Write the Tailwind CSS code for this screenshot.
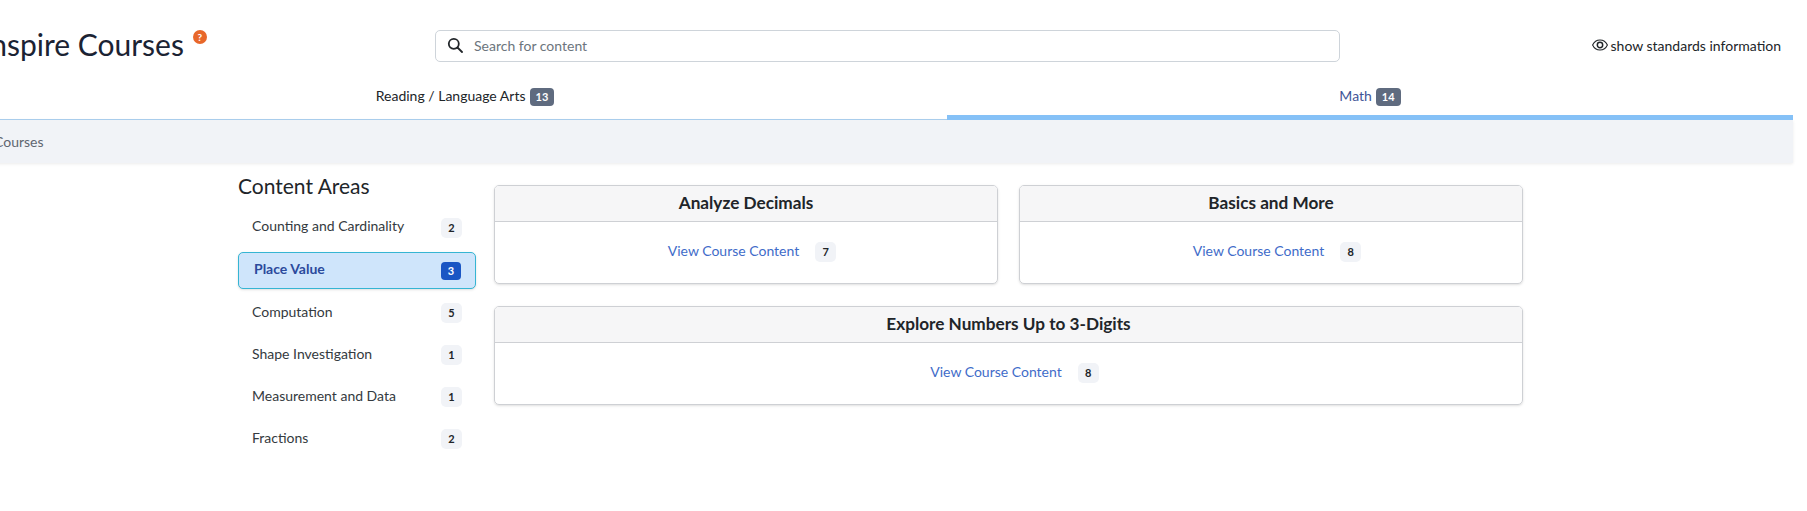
<!DOCTYPE html>
<html lang="en">
<head>
    <meta charset="UTF-8">
    <title>Inspire Courses</title>
    <script src="https://cdn.jsdelivr.net/npm/@tailwindcss/browser@4"></script>
</head>
<body class="bg-white overflow-hidden font-['Lato','Liberation_Sans',sans-serif] text-[#212529]">
    <div class="w-[1810px] ml-[-17px] h-[511px]">
        <!-- Header -->
        <div class="relative flex items-center h-[78px] pt-[12px]">
            <div class="w-[452px] shrink-0 flex items-start">
                <h1 class="text-[30px] leading-[36px] font-normal ml-[-1px] mt-[-2px] text-[#1b2333]">Inspire Courses</h1>
                <span class="ml-[9px] mt-[2px] w-[14px] h-[14px] rounded-full bg-[#e8672a] text-white text-[10px] font-bold leading-[14px] text-center">?</span>
            </div>
            <div class="w-[905px] h-[32px] mt-[2px] shrink-0 flex items-center border border-[#ced4da] rounded-[5px] pl-[11px]">
                <svg class="w-[16px] h-[16px] mb-[2px] text-[#212529]" viewBox="0 0 16 16" fill="none" stroke="currentColor" stroke-width="1.8">
                    <circle cx="6.8" cy="6.8" r="5"/>
                    <path d="M10.5 10.5 15 15" stroke-linecap="round"/>
                </svg>
                <span class="ml-[11px] mb-[2px] text-[14px] text-[#6c757d]">Search for content</span>
            </div>
            <div class="flex-1 flex items-center justify-end pr-[12px] text-[14px]">
                <svg class="w-[16px] h-[12px] mr-[3px]" viewBox="0 0 16 12" fill="none" stroke="currentColor">
                    <path d="M.6 6C2.200 2.600 4.800 1 8 1s5.800 1.600 7.400 5c-1.600 3.400-4.200 5-7.400 5S2.200 9.400.6 6Z" stroke-width="1.100"/>
                    <circle cx="8" cy="6" r="2.700" stroke-width="1.500"/>
                </svg>
                <span>show standards information</span>
            </div>
        </div>

        <!-- Tabs -->
        <div class="flex h-[42px] text-[14px] w-[1810px]">
            <div class="w-[964px] flex items-center justify-center gap-[4px] border-b border-[#a9cdec] pb-[7px]">
                <span>Reading / Language Arts</span>
                <span class="bg-[#5f6b7f] text-white text-[11px] font-bold leading-[18px] px-[6px] rounded-[4px] mt-[3px]">13</span>
            </div>
            <div class="w-[846px] flex items-center justify-center gap-[4px] border-b-[5px] border-[#85c1f7] pb-[3px] text-[#3f5597]">
                <span>Math</span>
                <span class="bg-[#5f6b7f] text-white text-[11px] font-bold leading-[18px] px-[6px] rounded-[4px] mt-[3px]">14</span>
            </div>
        </div>

        <!-- Breadcrumb -->
        <div class="h-[43px] w-[1810px] bg-[#f1f3f7] shadow-[0_1px_3px_rgba(0,0,0,0.08)] flex items-center pl-[11px] text-[14px] text-[#5f6670]">Courses</div>

        <!-- Content -->
        <div class="flex pl-[255px] pt-[22px]">
            <div class="w-[238px] shrink-0 mt-[-11px]">
                <h2 class="text-[21px] leading-[24px] font-normal mb-[12px]">Content Areas</h2>
                <div class="flex flex-col gap-[6px] text-[#343a40]">
                    <div class="h-[36px] flex items-center justify-between px-[14px] text-[14px]">
                        <span class="mb-[5px]">Counting and Cardinality</span>
                        <span class="w-[21px] h-[20px] rounded-[5px] bg-[#f1f3f7] text-[#212529] text-[11px] font-bold leading-[20px] text-center">2</span>
                    </div>
                    <div class="h-[37px] flex items-center justify-between pl-[15px] pr-[14px] text-[14px] font-bold text-[#2b4a9c] bg-[#cfe5fb] border border-[#35b5d3] rounded-[5px] shadow-sm">
                        <span class="mb-[4px]">Place Value</span>
                        <span class="w-[20px] h-[18px] rounded-[4px] bg-[#1a56c4] text-white text-[11px] font-bold leading-[18px] text-center">3</span>
                    </div>
                    <div class="h-[36px] flex items-center justify-between px-[14px] text-[14px]">
                        <span class="mb-[3px]">Computation</span>
                        <span class="w-[21px] h-[20px] rounded-[5px] bg-[#f1f3f7] text-[#212529] text-[11px] font-bold leading-[20px] text-center">5</span>
                    </div>
                    <div class="h-[36px] flex items-center justify-between px-[14px] text-[14px]">
                        <span class="mb-[3px]">Shape Investigation</span>
                        <span class="w-[21px] h-[20px] rounded-[5px] bg-[#f1f3f7] text-[#212529] text-[11px] font-bold leading-[20px] text-center">1</span>
                    </div>
                    <div class="h-[36px] flex items-center justify-between px-[14px] text-[14px]">
                        <span class="mb-[3px]">Measurement and Data</span>
                        <span class="w-[21px] h-[20px] rounded-[5px] bg-[#f1f3f7] text-[#212529] text-[11px] font-bold leading-[20px] text-center">1</span>
                    </div>
                    <div class="h-[36px] flex items-center justify-between px-[14px] text-[14px]">
                        <span class="mb-[3px]">Fractions</span>
                        <span class="w-[21px] h-[20px] rounded-[5px] bg-[#f1f3f7] text-[#212529] text-[11px] font-bold leading-[20px] text-center">2</span>
                    </div>
                </div>
            </div>

            <div class="ml-[18px] w-[1029px] grid grid-cols-[504px_504px] gap-x-[21px] gap-y-[22px] content-start">
                <div class="h-[99px] border border-[#ced0d4] rounded-[5px] shadow-sm overflow-hidden">
                    <div class="h-[36px] bg-[#f6f6f7] border-b border-[#ced0d4] text-[17.200px] font-bold leading-[33px] text-center">Analyze Decimals</div>
                    <div class="h-[61px] flex items-center justify-center gap-[16px] pl-[12px] pb-[2px] text-[14px] text-[#3f6cc9]">
                        <span class="mb-[2px]">View Course Content</span>
                        <span class="w-[21px] h-[20px] rounded-[5px] bg-[#f1f3f7] text-[11px] font-bold leading-[20px] text-center text-[#212529]">7</span>
                    </div>
                </div>
                <div class="h-[99px] border border-[#ced0d4] rounded-[5px] shadow-sm overflow-hidden">
                    <div class="h-[36px] bg-[#f6f6f7] border-b border-[#ced0d4] text-[17.200px] font-bold leading-[33px] text-center">Basics and More</div>
                    <div class="h-[61px] flex items-center justify-center gap-[16px] pl-[12px] pb-[2px] text-[14px] text-[#3f6cc9]">
                        <span class="mb-[2px]">View Course Content</span>
                        <span class="w-[21px] h-[20px] rounded-[5px] bg-[#f1f3f7] text-[11px] font-bold leading-[20px] text-center text-[#212529]">8</span>
                    </div>
                </div>
                <div class="col-span-2 h-[99px] border border-[#ced0d4] rounded-[5px] shadow-sm overflow-hidden">
                    <div class="h-[36px] bg-[#f6f6f7] border-b border-[#ced0d4] text-[17.200px] font-bold leading-[33px] text-center">Explore Numbers Up to 3-Digits</div>
                    <div class="h-[61px] flex items-center justify-center gap-[16px] pl-[12px] pb-[2px] text-[14px] text-[#3f6cc9]">
                        <span class="mb-[2px]">View Course Content</span>
                        <span class="w-[21px] h-[20px] rounded-[5px] bg-[#f1f3f7] text-[11px] font-bold leading-[20px] text-center text-[#212529]">8</span>
                    </div>
                </div>
            </div>
        </div>
    </div>
</body>
</html>
